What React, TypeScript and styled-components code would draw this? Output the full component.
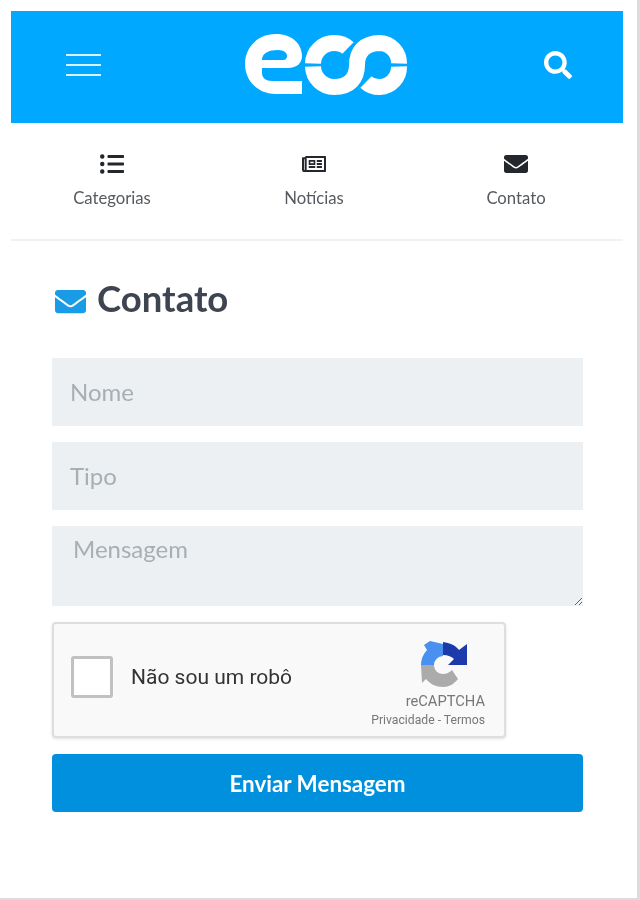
import React from 'react';
import styled, { createGlobalStyle } from 'styled-components';
import { FaEnvelope, FaListUl, FaRegNewspaper, FaSearch } from 'react-icons/fa';

const GlobalStyle = createGlobalStyle`
  html, body {
    margin: 0;
    padding: 0;
    background: #fff;
  }
  body {
    font-family: Lato, "Open Sans", sans-serif;
  }
`;

const Page = styled.div`
  box-sizing: border-box;
  width: 640px;
  height: 900px;
  padding: 11px 14px 0 11px;
  background: #fff;
  border-right: 3px solid #dcdcdc;
  border-bottom: 2px solid #dcdcdc;
  overflow: hidden;
  filter: blur(0.4px);
`;

const Header = styled.header`
  display: flex;
  align-items: center;
  justify-content: space-between;
  height: 112px;
  padding: 0 51px 4px 55px;
  box-sizing: border-box;
  background: #00a8ff;
  color: #fff;
`;

const Burger = styled.button`
  display: flex;
  flex-direction: column;
  gap: 8px;
  width: 35px;
  padding: 0;
  border: 0;
  background: none;
`;

const BurgerLine = styled.span`
  display: block;
  height: 2px;
  background: #d8f1ff;
`;

const SearchButton = styled.button`
  display: flex;
  padding: 0;
  border: 0;
  background: none;
  color: #fff;
  font-size: 28px;
`;

const Nav = styled.nav`
  display: grid;
  grid-template-columns: repeat(3, 1fr);
  height: 118px;
  padding-right: 6px;
  box-sizing: border-box;
  border-bottom: 2px solid #f1f2f2;
`;

const NavItem = styled.a`
  display: flex;
  flex-direction: column;
  align-items: center;
  padding-top: 29px;
  color: #555b60;
  font-size: 16.7px;
  line-height: 20px;
`;

const NavIcon = styled.span`
  display: flex;
  align-items: center;
  height: 24px;
  margin-bottom: 12px;
  color: #24282c;
  font-size: 24px;
`;

const Content = styled.main`
  padding: 35px 40px 0 41px;
`;

const Title = styled.h1`
  display: flex;
  align-items: center;
  gap: 11px;
  height: 44px;
  margin: 0 0 38px 3px;
  color: #3e4550;
  font-size: 36.5px;
  font-weight: 700;
`;

const TitleIcon = styled.span`
  display: flex;
  margin-top: 6px;
  color: #1a9be6;
  font-size: 31px;
`;

const Form = styled.form`
  display: flex;
  flex-direction: column;
  gap: 16px;
`;

const Field = styled.input`
  box-sizing: border-box;
  width: 100%;
  height: 68px;
  padding: 0 18px 2px;
  border: 0;
  background: #ecf0f3;
  color: #3e4550;
  font-family: inherit;
  font-size: 24px;

  &::placeholder {
    color: #a8afb3;
  }
`;

const MessageField = styled.textarea`
  box-sizing: border-box;
  display: block;
  width: 100%;
  height: 80px;
  padding: 8px 21px;
  border: 0;
  background: #ecf0f3;
  color: #3e4550;
  font-family: inherit;
  font-size: 24px;
  line-height: 29px;

  &::placeholder {
    color: #a8afb3;
  }
`;

const Captcha = styled.div`
  box-sizing: border-box;
  display: flex;
  align-items: center;
  justify-content: space-between;
  width: 454px;
  height: 116px;
  padding: 0 19px 0 17px;
  border: 2px solid #dedede;
  border-radius: 4px;
  background: #f9f9f9;
  box-shadow: 0 1px 3px rgba(0, 0, 0, 0.12);
  font-family: Roboto, sans-serif;
`;

const CaptchaLabel = styled.label`
  display: flex;
  align-items: center;
  gap: 18px;
  margin-bottom: 6px;
  color: #333;
  font-size: 21px;
`;

const CaptchaBox = styled.span`
  box-sizing: border-box;
  width: 42px;
  height: 42px;
  border: 3px solid #c1c1c1;
  border-radius: 3px;
  background: #fff;
`;

const CaptchaBrand = styled.div`
  display: flex;
  flex-direction: column;
  align-items: flex-end;
  margin-top: 8px;
  color: #777;
  text-align: right;
`;

const CaptchaName = styled.span`
  margin-top: 2px;
  font-size: 14.7px;
  line-height: 20px;
`;

const CaptchaLinks = styled.span`
  font-size: 12.2px;
  line-height: 18px;
  white-space: nowrap;
`;

const SubmitButton = styled.button`
  height: 58px;
  border: 0;
  border-radius: 4px;
  background: #0090dd;
  color: #fff;
  font-family: inherit;
  font-size: 22.4px;
  font-weight: 700;
`;

const LogoMark = styled.svg`
  display: block;
  width: 165px;
  height: 62px;
  margin-left: 8px;
`;

const CaptchaMark = styled.svg`
  display: block;
  width: 48px;
  height: 50px;
  margin-right: 17px;
`;

function Logo() {
  return (
    <LogoMark viewBox="244 36 165 62" aria-label="eoo">
      <path
        fill="#fff"
        fillRule="evenodd"
        d="M302 96H276C257 96 245 82 245 66C245 49 258 36 276 36C292 36 302 46 302 58C302 65 297 70 288 70H262V75C262 80 266 83 272 83H302ZM262 62H283C286 62 287 60 287 58C287 55 284 52 278 52C269 52 262 55 262 62Z"
      />
      <g fill="none" stroke="#fff" strokeWidth="16">
        <path d="M313 68.5A21 21 0 0 0 334 89C350 89 357 80 357 67C357 54 364 45 380 45A20 20 0 0 1 399 65.5" />
        <path d="M313 65.5A21 21 0 0 1 334 45C340 45 344 46 348 50" />
        <path d="M399 68.5A20 20 0 0 1 380 89C374 89 370 88 366 84" />
      </g>
    </LogoMark>
  );
}

function CaptchaLogo() {
  return (
    <CaptchaMark viewBox="0 0 48 50">
      <path fill="#4a90f0" d="M1 26A22 22 0 0 1 7 11L4 6L10 2L23 5V17A9 9 0 0 0 14 26Z" />
      <path fill="#1c3aa9" d="M23 3C30 4 35 6 39 11L47 5V26H28L34 20C32 18 28 16 23 16Z" />
      <path fill="#ababab" d="M1 26H14C14 31 18 35 23 35C27 35 30 33 32 31L38 40C34 45 29 48 23 48C16 48 10 45 6 40L2 44Z" />
    </CaptchaMark>
  );
}

export default function App() {
  return (
    <>
      <GlobalStyle />
      <Page>
        <Header>
          <Burger aria-label="Menu">
            <BurgerLine />
            <BurgerLine />
            <BurgerLine />
          </Burger>
          <Logo />
          <SearchButton aria-label="Buscar">
            <FaSearch />
          </SearchButton>
        </Header>
        <Nav>
          <NavItem>
            <NavIcon><FaListUl /></NavIcon>
            Categorias
          </NavItem>
          <NavItem>
            <NavIcon><FaRegNewspaper /></NavIcon>
            Notícias
          </NavItem>
          <NavItem>
            <NavIcon><FaEnvelope /></NavIcon>
            Contato
          </NavItem>
        </Nav>
        <Content>
          <Title>
            <TitleIcon><FaEnvelope /></TitleIcon>
            Contato
          </Title>
          <Form>
            <Field placeholder="Nome" />
            <Field placeholder="Tipo" />
            <MessageField placeholder="Mensagem" />
            <Captcha>
              <CaptchaLabel>
                <CaptchaBox />
                Não sou um robô
              </CaptchaLabel>
              <CaptchaBrand>
                <CaptchaLogo />
                <CaptchaName>reCAPTCHA</CaptchaName>
                <CaptchaLinks>Privacidade - Termos</CaptchaLinks>
              </CaptchaBrand>
            </Captcha>
            <SubmitButton type="button">Enviar Mensagem</SubmitButton>
          </Form>
        </Content>
      </Page>
    </>
  );
}
